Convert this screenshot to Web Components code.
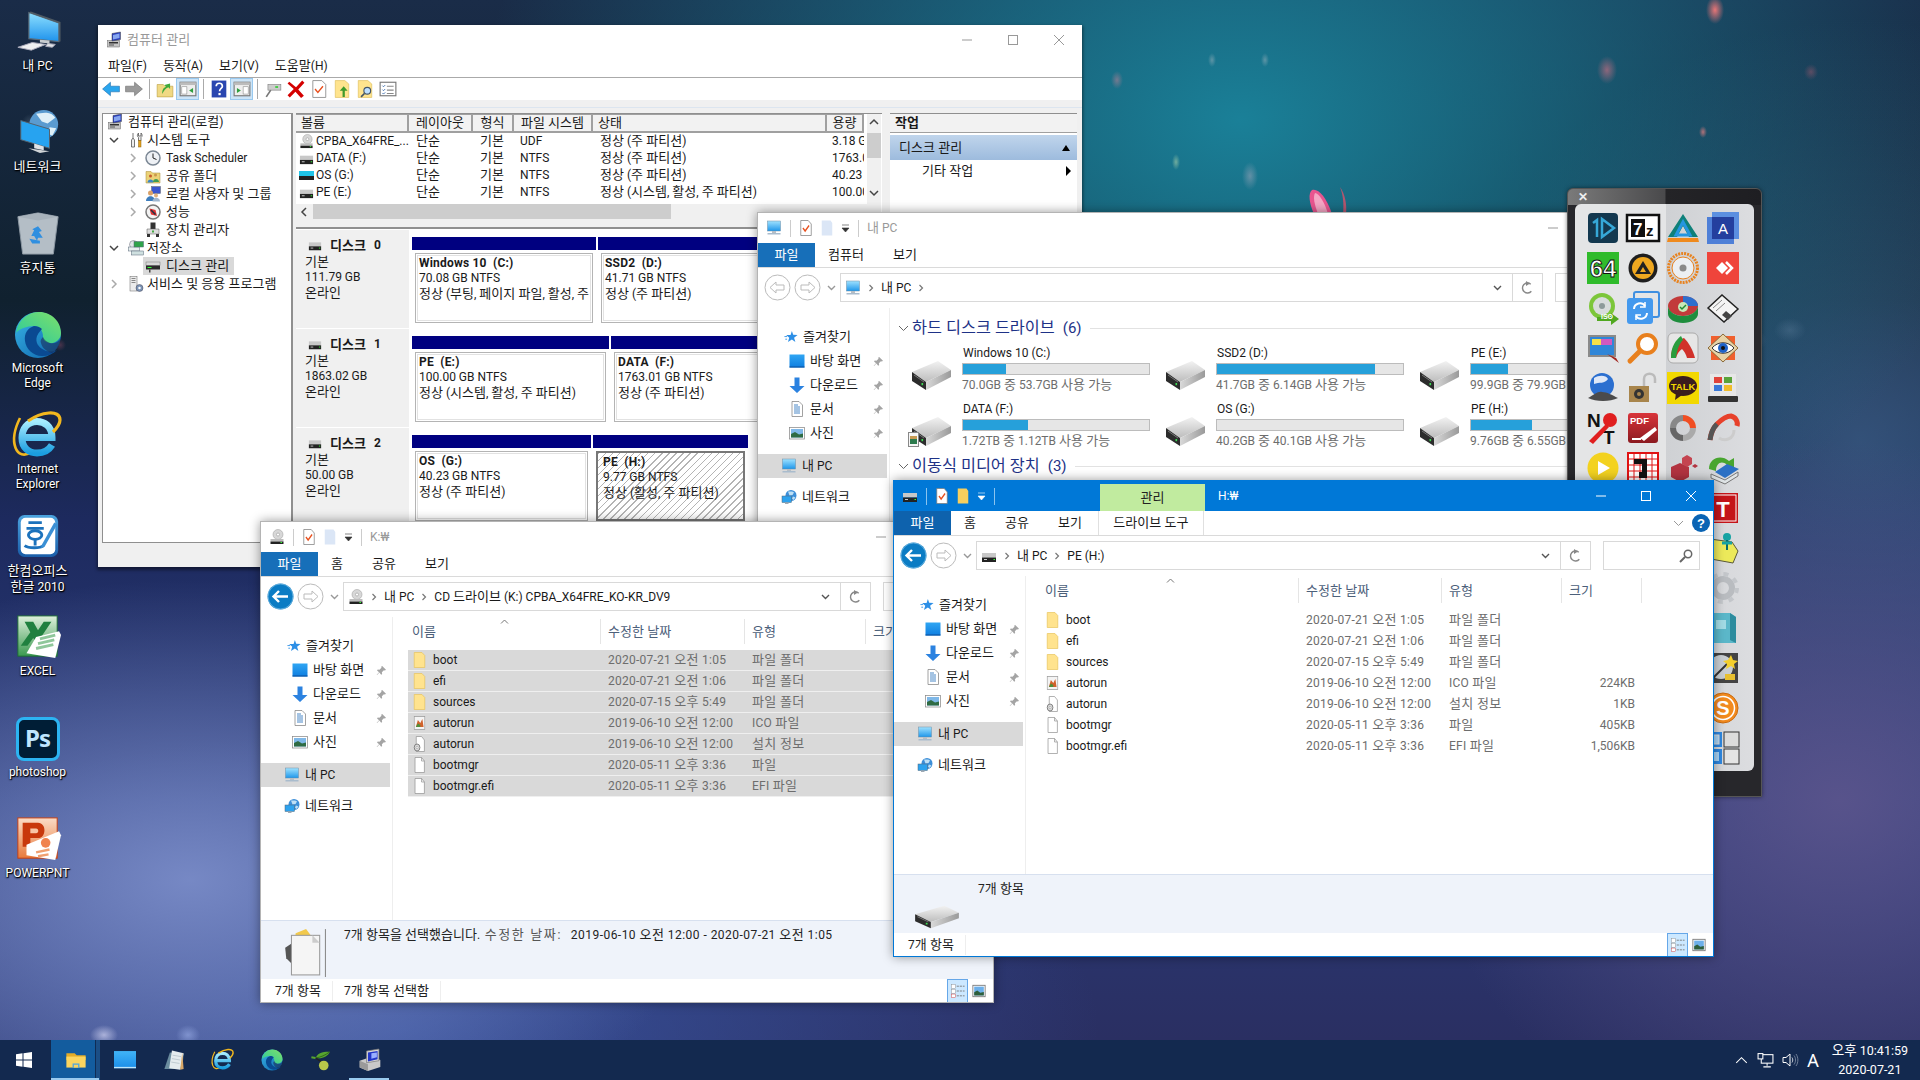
<!DOCTYPE html>
<html lang="ko">
<head>
<meta charset="utf-8">
<title>Desktop</title>
<style>
  html, body { margin: 0; padding: 0; background: #1a2b47; }
</style>
</head>
<body>
<desk-top>
  <desk-icons></desk-icons>

  <mmc-window></mmc-window>

  <explorer-window left="757" top="212" width="909" height="420" z="2" title="내 PC"
      tabs="컴퓨터,보기" crumbs="내 PC" title-icon="pc" addr-icon="pc" back="off">
    <drive-group heading="하드 디스크 드라이브 (6)">
      <drive-tile name="Windows 10 (C:)" used="23" info="70.0GB 중 53.7GB 사용 가능"></drive-tile>
      <drive-tile name="SSD2 (D:)" used="85" info="41.7GB 중 6.14GB 사용 가능"></drive-tile>
      <drive-tile name="PE (E:)" used="20" info="99.9GB 중 79.9GB 사용 가능"></drive-tile>
      <drive-tile name="DATA (F:)" used="35" info="1.72TB 중 1.12TB 사용 가능" shared="1"></drive-tile>
      <drive-tile name="OS (G:)" used="0" info="40.2GB 중 40.1GB 사용 가능"></drive-tile>
      <drive-tile name="PE (H:)" used="33" info="9.76GB 중 6.55GB 사용 가능"></drive-tile>
    </drive-group>
    <drive-group heading="이동식 미디어 장치 (3)"></drive-group>
  </explorer-window>

  <icon-dock></icon-dock>

  <explorer-window left="260" top="521" width="734" height="482" z="4" title="K:₩"
      tabs="홈,공유,보기" crumbs="내 PC|CD 드라이브 (K:) CPBA_X64FRE_KO-KR_DV9" title-icon="cd" addr-icon="cd"
      back="on" details="selected" status="7개 항목|7개 항목 선택함">
    <file-list widths="193px 144px 121px 80px" selected="1"></file-list>
  </explorer-window>

  <explorer-window left="893" top="480" width="821" height="477" z="5" title="H:₩" active="1"
      tabs="홈,공유,보기" crumbs="내 PC|PE (H:)" title-icon="sdrive" addr-icon="sdrive"
      back="on" details="drive" status="7개 항목" manage="1">
    <file-list widths="258px 143px 120px 80px" sizes="1"></file-list>
  </explorer-window>

  <task-bar></task-bar>
</desk-top>

<script>
const FONT = '"Roboto","Noto Sans CJK KR",sans-serif';

// malgun hangul runs about 1px wider than the latin next to it at 12px
const KO = /[\uac00-\ud7a3]+(?: +[\uac00-\ud7a3]+)*/g;
function bumpHangul(root) {
  const walker = document.createTreeWalker(root, NodeFilter.SHOW_TEXT);
  const nodes = [];
  while (walker.nextNode()) {
    const p = walker.currentNode.parentNode;
    if (p.nodeName !== 'STYLE' && KO.test(walker.currentNode.data)) nodes.push(walker.currentNode);
    KO.lastIndex = 0;
  }
  nodes.forEach(n => {
    const frag = document.createDocumentFragment();
    let last = 0;
    n.data.replace(KO, (m, i) => {
      if (i > last) frag.append(n.data.slice(last, i));
      const s = document.createElement('span');
      s.style.fontSize = '1.085em';
      s.textContent = m;
      frag.append(s);
      last = i + m.length;
      return m;
    });
    if (last < n.data.length) frag.append(n.data.slice(last));
    n.replaceWith(frag);
  });
}

class Base extends HTMLElement {
  connectedCallback() { this.render(); }
  paint(css, html) {
    const root = this.shadowRoot || this.attachShadow({ mode: 'open' });
    root.innerHTML = `<style>${css}</style>${html}`;
    bumpHangul(root);
  }
  attr(name, dflt = '') {
    return this.hasAttribute(name) ? this.getAttribute(name) : dflt;
  }
}

const grad = (id, a, b, dir = 'x1="0" y1="0" x2="0" y2="1"') =>
  `<linearGradient id="${id}" ${dir}><stop offset="0" stop-color="${a}"/><stop offset="1" stop-color="${b}"/></linearGradient>`;

const ICONS = {
  // small shell icons, 32 box
  pc: `<defs>${grad('g', '#9fe2ff', '#1f97ea')}</defs><rect x="3" y="2" width="26" height="20" fill="url(#g)" stroke="#6f8ea6"/><rect x="12" y="22" width="8" height="4" fill="#b7bec5"/><rect x="3" y="26" width="26" height="3" fill="#a9bccd"/>`,
  desk: `<defs>${grad('g', '#30a6f3', '#0f7ee0')}</defs><rect x="1" y="3" width="30" height="26" fill="url(#g)"/><rect x="1" y="27" width="30" height="2" fill="#0a4f9a"/>`,
  down: `<path d="M11 1h10v17h10L16 32 1 18h10z" fill="#2b82e0"/>`,
  doc: `<path d="M6 1h14l7 7v23H6z" fill="#fff" stroke="#8a8a8a" stroke-width="1.6"/><path d="M10 8h8M10 12h12M10 16h12M10 20h12M10 24h12" stroke="#4a88c7" stroke-width="2"/>`,
  pics: `<rect x="1" y="5" width="30" height="23" fill="#fff" stroke="#8a8a8a" stroke-width="1.5"/><rect x="4" y="8" width="24" height="17" fill="#7fb8e8"/><path d="M4 25v-7l8-4 8 5 8-2v8z" fill="#2f6b43"/>`,
  star: `<path d="M18 2l3 9 10 .5-8 6 3 10-8-6-9 6 3-10-7-6h10z" fill="#2d8fe6"/><path d="M1 15h6M3 21h4" stroke="#2d8fe6" stroke-width="2"/>`,
  pin: `<path d="M18 3l11 11-3 2-3-1-6 6 1 5-3 2-5-6-7 7-1-1 7-7-6-5 2-3 5 1 6-6-1-3z" fill="#a4a4a4"/>`,
  net: `<circle cx="20" cy="13" r="11" fill="#3d8fd8"/><path d="M14 5c4 1 8-2 12 2l-3 5-6 1zM24 15l5 2-4 5-3-3z" fill="#bfe0f5"/><rect x="2" y="14" width="19" height="13" fill="#2da2ee" stroke="#567"/><rect x="8" y="27" width="7" height="3" fill="#a0aab4"/>`,
  sdrive: `<rect x="2" y="10" width="28" height="9" fill="#c8c8c8"/><rect x="2" y="19" width="28" height="9" fill="#222"/><rect x="6" y="22" width="6" height="2" fill="#ccc"/><rect x="25" y="22" width="3" height="2" fill="#3f3"/>`,
  cd: `<circle cx="18" cy="11" r="10" fill="#d7d7d7" stroke="#999"/><circle cx="18" cy="11" r="3" fill="#fff" stroke="#888"/><rect x="3" y="20" width="26" height="5" fill="#bdbdbd"/><rect x="3" y="25" width="26" height="5" fill="#222"/><rect x="23" y="26" width="3" height="2" fill="#3f3"/>`,
  qdoc: `<path d="M4 1h17l7 7v23H4z" fill="#fff" stroke="#777" stroke-width="1.5"/><path d="M9 16l5 6 9-11" fill="none" stroke="#e8501e" stroke-width="3"/>`,
  qfolder: `<path d="M4 1h20l4 5v25H4z" fill="#dbe6f6"/>`,
  qfolderY: `<path d="M4 1h20l4 5v25H4z" fill="#f7cf5e"/>`,
  folder: `<path d="M3 1h19l7 6v24H3z" fill="#ffe38e" stroke="#e8c25a" stroke-width="1.5"/>`,
  ico: `<rect x="3" y="3" width="26" height="26" fill="#f4f4f4" stroke="#999" stroke-width="1.5"/><path d="M7 24l5-14 6 6 5-8 3 16z" fill="#d1622c"/><path d="M7 24l5-7 6 3v4z" fill="#4e8f3a"/>`,
  inf: `<path d="M8 1h13l7 7v23H8z" fill="#fff" stroke="#8d8d8d" stroke-width="1.5"/><circle cx="10" cy="23" r="7" fill="#ddd" stroke="#777" stroke-width="2"/><circle cx="10" cy="23" r="2.5" fill="#fff" stroke="#777"/>`,
  file: `<path d="M5 1h16l7 7v23H5z" fill="#fff" stroke="#8d8d8d" stroke-width="1.5"/><path d="M21 1v7h7" fill="none" stroke="#8d8d8d" stroke-width="1.5"/>`,
  multi: `<path d="M14 6l10-4 6 8-6 14-12 6z" fill="#f2c94c"/><path d="M4 20l9-6 4 10-6 12-6-6z" fill="#555"/><rect x="10" y="8" width="27" height="38" fill="#f5f5f5" stroke="#999"/><path d="M30 8l7 7h-7z" fill="#ccc"/><rect x="42" y="2" width="1" height="46" fill="#888"/>`,
  bigdrive: `<defs>${grad('t', '#f2f2f2', '#bdbdbd')}${grad('s', '#d9d9d9', '#9a9a9a', 'x1="0" y1="0" x2="1" y2="0"')}</defs><path d="M1 12L27 1l13 9-25 12z" fill="url(#t)"/><path d="M15 22l25-12v7L15 30z" fill="url(#s)"/><path d="M1 12l14 10v8L1 21z" fill="#2c2c2c"/><path d="M3 15l10 7" stroke="#777"/><rect x="10.5" y="23" width="1.6" height="2.2" fill="#3ddc54"/>`,

  // computer management tree and toolbar
  mmc: `<rect x="3" y="17" width="24" height="13" fill="#c4c4c4" stroke="#666"/><rect x="6" y="20" width="18" height="3" fill="#333"/><rect x="6" y="25" width="10" height="2" fill="#555"/><path d="M12 3l17-3v15l-17 3z" fill="#2a3fc0" stroke="#444"/><path d="M14 6l13-3v9l-13 3z" fill="#86a6f0"/>`,
  tools: `<path d="M10 2v10l-3 4v14h6V16l-3-4M21 2c-3 3-3 7 0 9v6h5V11c3-2 3-6 0-9v6h-5z" fill="#eee" stroke="#555" stroke-width="1.6"/><rect x="21" y="17" width="5" height="13" fill="#e7a21c" stroke="#8a6410"/>`,
  clock: `<circle cx="16" cy="16" r="14" fill="#eef1f5" stroke="#7b8794" stroke-width="3"/><path d="M16 7v9l7 3" fill="none" stroke="#222" stroke-width="2"/>`,
  share: `<path d="M2 7h10l3 3h15v20H2z" fill="#ecd277" stroke="#a78b34"/><circle cx="11" cy="16" r="3" fill="#c45a2c"/><path d="M5 29c0-8 12-8 12 0z" fill="#3b86c5"/><circle cx="21" cy="14" r="3" fill="#c9974c"/><path d="M16 28c0-8 12-8 12 0z" fill="#3e9b55"/>`,
  users: `<rect x="13" y="1" width="18" height="14" fill="#3b57cf" stroke="#666"/><circle cx="11" cy="14" r="5" fill="#d9a26a"/><path d="M2 30c0-13 18-13 18 0z" fill="#3d7dbd"/><circle cx="22" cy="19" r="4" fill="#e0b07c"/><path d="M15 31c0-10 15-10 15 0z" fill="#9fb6cf"/>`,
  perf: `<circle cx="16" cy="16" r="14" fill="#f3f3f3" stroke="#777" stroke-width="3"/><path d="M9 9l12 3 3 12-12-3z" fill="#d33"/><path d="M12 12l9 9" stroke="#234" stroke-width="3"/>`,
  devmgr: `<rect x="11" y="1" width="10" height="13" fill="#333"/><path d="M4 14h24v10H4z" fill="#ddd" stroke="#555"/><rect x="4" y="24" width="6" height="6" fill="#333"/><rect x="22" y="24" width="6" height="6" fill="#333"/><rect x="14" y="17" width="4" height="4" fill="#4a4"/>`,
  storage: `<circle cx="11" cy="9" r="8" fill="#dfe6e6" stroke="#667"/><rect x="1" y="14" width="22" height="8" fill="#e8efef" stroke="#567"/><rect x="7" y="22" width="24" height="8" fill="#cfe0e0" stroke="#567"/><rect x="12" y="3" width="19" height="11" fill="#2ea34a" stroke="#567"/>`,
  diskm: `<rect x="2" y="8" width="28" height="7" fill="#d8d8d8" stroke="#777"/><rect x="2" y="15" width="28" height="8" fill="#2a2a2a"/><rect x="8" y="23" width="3" height="6" fill="#444"/><rect x="5" y="18" width="8" height="2" fill="#3f3"/>`,
  svc: `<rect x="4" y="1" width="14" height="29" fill="#ececec" stroke="#666"/><path d="M7 5h8M7 9h8M7 13h8" stroke="#888" stroke-width="2"/><circle cx="23" cy="24" r="7" fill="#7b93b5" stroke="#445"/><circle cx="23" cy="24" r="2.5" fill="#fff"/>`,
  back: `<path d="M1 16L15 4v7h16v10H15v7z" fill="#2aa6ee" stroke="#1967a8"/>`,
  fwd: `<path d="M31 16L17 4v7H1v10h16v7z" fill="#9a9a9a" stroke="#666"/>`,
  up: `<path d="M2 8h11l3 3h14v19H2z" fill="#f0d984" stroke="#b89a3a"/><path d="M11 25c0-8 2-11 7-13l-3-3 10-3v10l-3-3c-5 2-8 6-11 12z" fill="#3eaa3a"/>`,
  panelL: `<rect x="2" y="4" width="28" height="24" fill="#eee" stroke="#777" stroke-width="2"/><rect x="2" y="4" width="28" height="5" fill="#bcbcbc"/><rect x="5" y="12" width="9" height="13" fill="#fff" stroke="#888"/><path d="M25 14v9l-7-4.500z" fill="#2d9e3e"/>`,
  panelR: `<rect x="2" y="4" width="28" height="24" fill="#eee" stroke="#777" stroke-width="2"/><rect x="2" y="4" width="28" height="5" fill="#bcbcbc"/><rect x="18" y="12" width="9" height="13" fill="#fff" stroke="#888"/><path d="M7 14v9l7-4.500z" fill="#2d9e3e"/>`,
  help: `<rect x="3" y="1" width="26" height="30" fill="#2a46b0"/><path d="M11 11c0-7 11-7 11 0 0 4-5 4-5 9" fill="none" stroke="#fff" stroke-width="3"/><rect x="15" y="23" width="4" height="4" fill="#fff"/>`,
  connect: `<rect x="7" y="8" width="23" height="10" fill="#ccc" stroke="#777"/><rect x="20" y="11" width="5" height="3" fill="#3c3"/><path d="M4 30L12 18" stroke="#777" stroke-width="3"/>`,
  del: `<path d="M4 3l12 10L27 1l4 4-11 12 10 11-5 4-10-11L5 31l-4-4 11-11L1 6z" fill="#d40000"/>`,
  props: `<path d="M5 1h16l7 7v23H5z" fill="#fff" stroke="#888" stroke-width="1.5"/><path d="M9 16l5 6 9-11" fill="none" stroke="#e8501e" stroke-width="2.500"/>`,
  exportf: `<path d="M4 1h17l7 6v24H4z" fill="#ffe48e" stroke="#d8b84e"/><path d="M17 30V19h-5l7-8 7 8h-5v11z" fill="#3f9a2c"/>`,
  findf: `<path d="M4 1h17l7 6v24H4z" fill="#ffe48e" stroke="#d8b84e"/><circle cx="20" cy="19" r="6" fill="#bfe0ff" stroke="#456" stroke-width="2"/><path d="M15 24l-6 6" stroke="#456" stroke-width="3"/>`,
  listv: `<rect x="2" y="4" width="28" height="24" fill="#fff" stroke="#777" stroke-width="2"/><path d="M6 10l2 2 3-3M6 17l2 2 3-3M6 23l2 2 3-3" fill="none" stroke="#36a" stroke-width="1.500"/><path d="M14 11h12M14 18h12M14 24h12" stroke="#888" stroke-width="2"/>`,
  viewd: `<rect x="1" y="1" width="9" height="9" fill="#fff" stroke="#888"/><rect x="1" y="12" width="9" height="9" fill="#fff" stroke="#888"/><rect x="1" y="23" width="9" height="8" fill="#fff" stroke="#c33"/><path d="M13 5h5M20 5h5M27 5h4M13 16h5M20 16h5M27 16h4M13 27h5M20 27h5M27 27h4" stroke="#777" stroke-width="2"/>`,
  viewp: `<rect x="2" y="3" width="28" height="26" fill="#fff" stroke="#777" stroke-width="2"/><rect x="5" y="6" width="22" height="20" fill="#6db0ea"/><path d="M5 26v-7l7-4 7 5 8-2v8z" fill="#2e5f3c"/>`,

  // desktop, 48 box
  dpc: `<defs>${grad('g', '#8ee0ff', '#1e92ec')}</defs><path d="M14.500 4.700L45.800 15.600V35L14.500 32z" fill="url(#g)" stroke="#5b6a76" stroke-width="1.200"/><path d="M14.500 4.700l2-1L47.500 14.500V35l-1.700 0V15.600z" fill="#4f5a63"/><path d="M3 41l15-5 14 2-15 6z" fill="#eef0f2" stroke="#aab"/><path d="M34 37l8 1-3 3-7-1z" fill="#dfe2e5" stroke="#aab"/><path d="M26 33l10 1v3l-10-1z" fill="#c8ccd0"/>`,
  dnet: `<circle cx="30" cy="16" r="15" fill="#5a9bd0"/><path d="M22 5c5 0 14-4 20 4l-8 6-6-2zM36 19l7 1-4 8-4-2z" fill="#dff0f8"/><path d="M6 12l30 9v20L6 32z" fill="#27a3f0" stroke="#545f6a"/><path d="M20 36l10 3v4l-10-2z" fill="#dfe3e6"/><path d="M14 41l22 3-10 2z" fill="#cfd3d6"/>`,
  dbin: `<path d="M3 7l21-4 21 4-5 39H8z" fill="#d8e0e6" fill-opacity=".82" stroke="#8d99a3"/><path d="M3 7l21 4 21-4-21-4z" fill="#a7b2bb"/><path d="M24 17l4 5-3 1 4 6h-5l-1 3-3-5h-3l3-6-2-1zM15 30l3 5h8v-3z" fill="#2f8fe0"/>`,
  dedge: `<defs>${grad('g', '#25c8a0', '#7ee06a', 'x1="0" y1="1" x2="1" y2="0"')}${grad('b', '#0d62aa', '#38b6e8', 'x1="1" y1="1" x2="0" y2="0"')}</defs><circle cx="24" cy="24" r="23" fill="url(#b)"/><path d="M2 22C4 8 15 1 25 1c13 0 22 10 22 21 0 6-5 11-12 10-4-1-6-3-6-6 0-6-3-11-9-11C13 15 5 18 2 22z" fill="url(#g)"/><path d="M20 15c-6 2-10 7-9 15 1 8 8 15 17 15 6 0 11-2 15-6-4 2-9 2-13 0-6-3-9-8-7-14 2-4 4-6 5-7-2-2-5-3-8-3z" fill="#0a4a92"/><path d="M29 26c1 3 4 5 7 6 5 1 9-1 11-5-1 7-5 13-9 15-7-2-10-6-11-10-1-2 0-4 2-6z" fill="#1c2a50" fill-opacity=".55"/>`,
  die: `<defs>${grad('g', '#a6ecff', '#1b9ee0')}</defs><path d="M6 6C-6 30 2 50 18 40" fill="none" stroke="#f2b71e" stroke-width="2.600"/><path d="M10 25.500H38C38 14 30 9.500 23 9.500 13 9.500 8 17 8 26c0 10 7 15 15 15 7 0 12-3 15-8" fill="none" stroke="url(#g)" stroke-width="7"/><path d="M14 9C27 0 46-3 46 8c0 4-3 8-7 12" fill="none" stroke="#f2b71e" stroke-width="3.200"/>`,
  dhwp: `<defs>${grad('g', '#4ba3df', '#1a5da8')}</defs><rect x="3" y="2" width="42" height="44" rx="7" fill="url(#g)"/><rect x="6" y="5" width="36" height="38" rx="5" fill="#fff"/><path d="M14 10h14M12 16h18" stroke="#1c72bc" stroke-width="3"/><ellipse cx="21" cy="23" rx="7" ry="4.500" fill="none" stroke="#1c72bc" stroke-width="3"/><path d="M21 28v6M10 34c4 3 16 3 20 0" fill="none" stroke="#1c72bc" stroke-width="3"/><path d="M28 33L41 10l3 2-13 23-4 2z" fill="#3a8fd4"/>`,
  dxls: `<defs>${grad('g', '#dff0dc', '#3b9a50')}</defs><rect x="3" y="2" width="41" height="42" fill="url(#g)" stroke="#1d6b35"/><path d="M10 8h9l5 9 6-9h8L28 23l5 8 -8 3-6-9-6 8H6l10-14z" fill="#20803f"/><path d="M22 24l24-6 2 4-6 24-30-5z" fill="#fff"/><path d="M26 26l16-4M24 31l17-4M22 36l18-4" stroke="#8fc79a" stroke-width="3"/>`,
  dppt: `<defs>${grad('g', '#fbdcc6', '#e87a3c')}</defs><rect x="3" y="2" width="41" height="42" fill="url(#g)" stroke="#c63d0f"/><path d="M8 7h16c9 0 9 16 0 16h-8v9H8z" fill="#c8380c"/><path d="M16 13v5h6c3 0 3-5 0-5z" fill="#f8c5a5"/><path d="M12 30l34-14 2 4-6 26-30-5z" fill="#fff"/><circle cx="32" cy="28" r="5" fill="#f0834e"/><path d="M22 38l14-3M24 42l11-2" stroke="#f0a070" stroke-width="2.500"/>`,

  // taskbar
  win: `<path d="M0 4.500l13-1.800V15H0zM15 2.400L32 0v15H15zM0 17h13v12.300L0 27.500zM15 17h17v15l-17-2.400z" fill="#fff"/>`,
  fx: `<path d="M2 6h12l3 3h13v7H2z" fill="#e3ac28"/><path d="M2 11h28v16H2z" fill="#fbd55f"/><rect x="11" y="21" width="10" height="6" fill="#5aa8d8"/><rect x="13" y="23" width="6" height="4" fill="#fbd55f"/>`,
  tdesk: `<defs>${grad('g', '#41b4f7', '#1a8de8')}</defs><rect x="0" y="3" width="32" height="25" fill="url(#g)"/><rect x="0" y="26" width="32" height="2" fill="#bfe6fb"/>`,
  note: `<path d="M10 5l20 2-2 22H2z" fill="#6a8c9e"/><path d="M13 2l17 4-5 24-16-2z" fill="#e4ebee"/><path d="M28 5l2 24-5 1z" fill="#d9a868"/><path d="M14 9l12 2M13 14l12 2M12 19l12 2" stroke="#aebcc3"/>`,
  cherry: `<path d="M8 13C12 4 22 4 29 4c-3 7-12 11-21 9z" fill="#57a52f"/><path d="M8 13c8-1 14-4 21-9" stroke="#234f12" fill="none"/><path d="M8 13l9 6" stroke="#222" stroke-width="2"/><circle cx="20" cy="24" r="7" fill="#b9c84a"/><path d="M2 12l6 1" stroke="#57a52f" stroke-width="3"/>`,
  tmmc: `<path d="M1 17l18-6 12 5v10l-18 6-12-5z" fill="#c9c9c9"/><path d="M1 17l12 5v10L1 27z" fill="#9a9a9a"/><path d="M11 3l18-3v17l-18 3z" fill="#d7d7d7" stroke="#777"/><path d="M13 5l14-2v12l-14 3z" fill="#2337c9"/><path d="M18 6l8-1v7l-8 2z" fill="#9ab0ff"/>`,
  caretup: `<path d="M3 22L16 9l13 13" fill="none" stroke="#fff" stroke-width="2.500"/>`,
  trnet: `<rect x="8" y="5" width="22" height="16" fill="none" stroke="#fff" stroke-width="2"/><rect x="2" y="3" width="9" height="10" fill="#13294f" stroke="#fff" stroke-width="2"/><path d="M19 21v5M12 28h14" stroke="#fff" stroke-width="2"/>`,
  trvol: `<path d="M2 11h6l8-7v24l-8-7H2z" fill="none" stroke="#fff" stroke-width="2"/><path d="M20 11c2 3 2 7 0 10" fill="none" stroke="#fff" stroke-width="1.500"/><path d="M24 7c4 5 4 13 0 18M28 4c5 7 5 17 0 24" fill="none" stroke="#8f9bb0" stroke-width="1.500"/>`,

  // icon dock, 32 box
  d1d: `<rect x="1" y="1" width="30" height="30" rx="4" fill="#13384f"/><path d="M6 11l4-3v17" fill="none" stroke="#36a8d8" stroke-width="2.500"/><path d="M15 7l12 9-12 9z" fill="none" stroke="#36a8d8" stroke-width="2.500"/>`,
  d7z: `<rect x="0" y="3" width="32" height="26" fill="#fff" stroke="#111" stroke-width="2.500"/><rect x="4" y="7" width="14" height="18" fill="#111"/><text x="6" y="23" font-size="17" font-weight="700" font-family="Liberation Sans" fill="#fff">7</text><text x="19" y="24" font-size="15" font-weight="700" font-family="Liberation Sans" fill="#111">z</text>`,
  dtri: `<path d="M16 2L1 25h9L16 14l6 11H31z" fill="#0e8079"/><path d="M16 10l-7 13h14z" fill="none" stroke="#2596e0" stroke-width="3"/><path d="M1 26h30l1 4H0z" fill="#ef8a1d"/>`,
  dacr: `<rect x="5" y="0" width="27" height="27" fill="#5b8fe0"/><rect x="0" y="5" width="27" height="27" fill="#3f76d6" fill-opacity=".9"/><rect x="5" y="5" width="22" height="22" fill="#243f9e"/><text x="16" y="22" text-anchor="middle" font-size="15" font-family="Liberation Sans" fill="#fff">A</text>`,
  d64: `<rect x="0" y="0" width="32" height="32" fill="#2fbb2b"/><text x="16" y="25" text-anchor="middle" font-size="24" font-weight="700" font-family="Liberation Sans" fill="#fff" stroke="#111" stroke-width=".9">64</text>`,
  daimp: `<circle cx="16" cy="16" r="14.500" fill="#1f1f1f"/><circle cx="16" cy="16" r="11" fill="#f0a820"/><path d="M16 9l8 13H8z" fill="#222"/><path d="M16 15l3 5h-6z" fill="#f0a820"/>`,
  dburn: `<circle cx="16" cy="16" r="14.500" fill="none" stroke="#e8821e" stroke-width="3" stroke-dasharray="2 1"/><circle cx="16" cy="16" r="11" fill="#eceff2" stroke="#e8821e"/><circle cx="16" cy="16" r="3.500" fill="#8a8a8a"/>`,
  dany: `<rect x="0" y="0" width="32" height="32" fill="#ef443b"/><path d="M9 16l6-6 6 6-6 6z" fill="#fff"/><path d="M19 10l6 6-6 6" fill="none" stroke="#fff" stroke-width="2.500"/>`,
  diso: `<circle cx="15" cy="14" r="13" fill="#7cc63a"/><circle cx="15" cy="14" r="9" fill="#d8dcdc"/><circle cx="15" cy="14" r="3" fill="#8d9a9a"/><path d="M10 25h14v-4l8 6-8 6v-4H10z" fill="#50a820"/><text x="20" y="27" text-anchor="middle" font-size="7" font-weight="700" font-family="Liberation Sans" fill="#fff">ISO</text>`,
  dsync: `<rect x="7" y="0" width="25" height="25" rx="2" fill="none" stroke="#3f8fe0" stroke-width="2"/><rect x="0" y="6" width="26" height="26" rx="3" fill="#4499ee"/><path d="M7 17a6 6 0 0 1 11-3M20 21a6 6 0 0 1-11 3" fill="none" stroke="#fff" stroke-width="2"/><path d="M18 10v5h-5M9 28v-5h5" fill="none" stroke="#fff" stroke-width="1.500"/>`,
  dpart: `<ellipse cx="16" cy="14" rx="15" ry="10" fill="#c23a3a"/><path d="M16 14V4c8 0 15 4 15 10z" fill="#2d6fce"/><path d="M1 14v8c0 5 7 9 15 9s15-4 15-9v-8c0 5-7 10-15 10S1 19 1 14z" fill="#1e8d3d"/><circle cx="16" cy="15" r="5" fill="#c9e8b8"/><path d="M13 15l2 2 4-4" fill="none" stroke="#218a35" stroke-width="1.500"/>`,
  dflop: `<path d="M1 16L15 3l16 14-14 13z" fill="#f4f4f4" stroke="#222" stroke-width="1.500"/><path d="M15 23l4-4 6 5-4 4z" fill="#444"/><path d="M6 16l9-8M9 19l9-8" stroke="#888"/>`,
  dscr: `<rect x="1" y="3" width="28" height="22" fill="#8a8a8a"/><rect x="3" y="5" width="24" height="18"  fill="#2f86d8"/><rect x="5" y="7" width="14" height="6" fill="#f4e04a"/><rect x="14" y="7" width="11" height="6" fill="#d05ac0"/><path d="M20 22l12 9-3-5z" fill="#a2261e"/>`,
  dmag: `<circle cx="20" cy="12" r="9" fill="#fff" stroke="#e8801e" stroke-width="4"/><path d="M13 19L3 29" stroke="#e8801e" stroke-width="5" stroke-linecap="round"/>`,
  dtile: `<rect x="1" y="1" width="30" height="30" rx="5" fill="#e6e6e6" stroke="#aaa"/><path d="M4 26C4 14 10 8 17 6c5 5 9 12 11 20H20c-1-4-3-7-5-9-3 2-5 5-6 9z" fill="#d1312a"/><path d="M4 26C4 14 9 8 14 4l2 4c-4 4-6 10-7 18z" fill="#2a9d3e"/>`,
  deye: `<rect x="4" y="4" width="24" height="24" fill="#f0602e"/><path d="M16 2l15 14-15 14L1 16z" fill="#e8d3a6" stroke="#8a6a3a"/><path d="M5 16c6-7 16-7 22 0-6 7-16 7-22 0z" fill="#fff" stroke="#333"/><circle cx="16" cy="16" r="5" fill="#1f63c8"/><circle cx="16" cy="16" r="2" fill="#111"/>`,
  dglobe: `<circle cx="15" cy="13" r="12" fill="#2b6fd0"/><path d="M7 6c5-3 12-3 14 1-3 5-9 3-14 5z" fill="#dfe8f7"/><path d="M1 26c6-3 10-7 14-6 5 0 10 3 16 6-8 4-22 4-30 0z" fill="#4b4b4b"/>`,
  dlock: `<rect x="2" y="14" width="20" height="16" fill="#a8854c"/><circle cx="12" cy="22" r="5" fill="#333"/><circle cx="12" cy="22" r="2" fill="#a8854c"/><path d="M17 14V7c0-7 11-7 11 0v4" fill="none" stroke="#bbb" stroke-width="2.500"/>`,
  dtalk: `<rect x="0" y="0" width="32" height="32" fill="#f2d800"/><ellipse cx="16" cy="14" rx="14" ry="10" fill="#3a1d1d"/><path d="M9 21l-1 7 7-5z" fill="#3a1d1d"/><text x="16" y="18" text-anchor="middle" font-size="9.500" font-weight="700" font-family="Liberation Sans" fill="#f2d800">TALK</text>`,
  dwin: `<rect x="3" y="2" width="26" height="22" fill="#e7e7e7"/><rect x="7" y="5" width="8" height="6" fill="#e0433a"/><rect x="17" y="5" width="8" height="6" fill="#59a33a"/><rect x="7" y="13" width="8" height="6" fill="#3a79d8"/><rect x="17" y="13" width="8" height="6" fill="#f0bc2a"/><rect x="1" y="24" width="30" height="6" rx="1" fill="#333"/>`,
  dnt: `<text x="0" y="15" font-size="19" font-weight="700" font-family="Liberation Sans" fill="#111">N</text><text x="16" y="32" font-size="19" font-weight="700" font-family="Liberation Sans" fill="#111">T</text><circle cx="23" cy="8" r="7" fill="#e01f1f"/><path d="M19 12L2 29l4 3 16-17z" fill="#e01f1f"/>`,
  dpdf: `<defs>${grad('g', '#d9343a', '#8b1a20')}</defs><rect x="1" y="1" width="30" height="30" rx="3" fill="url(#g)"/><text x="3" y="12" font-size="9.500" font-weight="700" font-family="Liberation Sans" fill="#fff">PDF</text><path d="M13 26l15-11 2 3-13 11z" fill="#fff"/><path d="M5 27h9" stroke="#fff" stroke-width="2"/>`,
  dring: `<path d="M16 3a13 13 0 0 1 13 13h-6a7 7 0 0 0-7-7z" fill="#f04e23"/><path d="M29 16a13 13 0 0 1-13 13v-6a7 7 0 0 0 7-7z" fill="#aaa"/><path d="M16 29A13 13 0 0 1 3 16h6a7 7 0 0 0 7 7z" fill="#666"/><path d="M3 16A13 13 0 0 1 16 3v6a7 7 0 0 0-7 7z" fill="#888"/>`,
  dsh: `<path d="M3 28c1-8 3-12 7-16s10-8 14-8a8 8 0 0 1 6 10" fill="none" stroke="#e7412b" stroke-width="5"/><path d="M3 28c1-8 3-12 7-16" fill="none" stroke="#555" stroke-width="5"/><path d="M27 18c0 9-9 12-15 8" fill="none" stroke="#ccc" stroke-width="3"/>`,
  dplay: `<circle cx="16" cy="16" r="15.500" fill="#f3d21f"/><path d="M11 9l12 7-12 7z" fill="#fff"/>`,
  dgrid: `<rect x="1" y="1" width="30" height="30" fill="#fff" stroke="#e01212" stroke-width="2"/><path d="M1 7h30M1 13h30M1 19h30M1 25h30M7 1v30M13 1v30M19 1v30M25 1v30" stroke="#e01212"/><path d="M7 7h13v19h-8v-6h3v-8H7z" fill="#111"/>`,
  dreg: `<path d="M4 15l9-4 9 4-9 5zM4 15v10l9 5V20zM22 15v10l-9 5V20z" fill="#b23340"/><path d="M15 6l5-3 5 3-5 3zM15 6v6l5 3V9zM25 6v6l-5 3V9z" fill="#c44450"/><path d="M25 14l3-2 3 2-3 2z" fill="#b23340"/>`,
  dbak: `<path d="M2 17C2 6 14 2 22 9l5-3v12l-11-2 4-3c-5-5-11-2-11 6z" fill="#48a52f"/><path d="M8 20l12-8 12 5-14 9z" fill="#2b70c4"/><path d="M4 22l14 6 13-8v4l-13 8-14-6z" fill="#dfe4e6" stroke="#777"/>`,
  dt: `<rect x="1" y="1" width="30" height="30" fill="#c41419"/><rect x="3" y="3" width="26" height="26" fill="none" stroke="#fff"/><text x="16" y="25" text-anchor="middle" font-size="22" font-weight="700" font-family="Liberation Sans" fill="#fff">T</text>`,
  dnote: `<path d="M3 7l22 3 6 9-5 12-22-4z" fill="#ece95a" stroke="#5a5a3a"/><circle cx="20" cy="5" r="4" fill="#17a3a3"/><path d="M20 8v10" stroke="#0a6a6a" stroke-width="2"/><path d="M15 11h10" stroke="#17a3a3" stroke-width="3"/>`,
  dgear: `<circle cx="16" cy="16" r="9" fill="none" stroke="#b9bcc0" stroke-width="6"/><circle cx="16" cy="16" r="14" fill="none" stroke="#c3c6ca" stroke-width="4" stroke-dasharray="5 6"/>`,
  dbook: `<path d="M3 1h20l6 4v26H8c-3 0-5-2-5-4z" fill="#5bb7c9"/><path d="M23 1l6 4v26l-6-3z" fill="#2d8c9e"/><rect x="9" y="8" width="10" height="9" fill="#a2dbe5"/>`,
  ddisk: `<rect x="1" y="1" width="30" height="30" fill="#444"/><circle cx="14" cy="15" r="12" fill="#c9ced2"/><path d="M5 27L22 10" stroke="#333" stroke-width="2"/><path d="M24 3l2 5 5 1-4 3 1 5-4-3-5 3 1-5-4-3 5-1z" fill="#f4cf2c"/><rect x="18" y="22" width="10" height="6" fill="#e8c030"/>`,
  ds: `<circle cx="16" cy="16" r="15" fill="#f28a1e" stroke="#c96a10"/><circle cx="16" cy="16" r="11.500" fill="none" stroke="#fff" stroke-width="1.500"/><text x="16" y="23" text-anchor="middle" font-size="20" font-weight="700" font-family="Liberation Sans" fill="#fff">S</text>`,
  dsq: `<rect x="0" y="0" width="15" height="15" fill="#2e87e0"/><rect x="3" y="3" width="9" height="9" fill="#a8d4f7" stroke="#ddd"/><rect x="17" y="0" width="15" height="15" fill="#dcdcdc" stroke="#333"/><rect x="0" y="17" width="15" height="15" fill="#2e87e0"/><rect x="3" y="20" width="9" height="9" fill="#a8d4f7"/><rect x="17" y="17" width="15" height="15" fill="#e4e4e4" stroke="#333"/>`
};

const BIG = ['dpc', 'dnet', 'dbin', 'dedge', 'die', 'dhwp', 'dxls', 'dppt'];

class XIcon extends Base {
  render() {
    const name = this.attr('name');
    const w = this.attr('size', '16');
    const h = this.attr('h', w);
    const box = name === 'multi' ? '0 0 44 48' : name === 'bigdrive' ? '0 0 41 31' : BIG.includes(name) ? '0 0 48 48' : '0 0 32 32';
    this.paint(`:host{display:inline-flex;flex:none;width:${w}px;height:${h}px}svg{display:block;overflow:visible}`,
      `<svg width="${w}" height="${h}" viewBox="${box}" preserveAspectRatio="none">${ICONS[name] || ''}</svg>`);
  }
}

class DeskTop extends Base {
  render() {
    const dots = [
      [1715,10,9,14,'rgba(242,120,120,.95)'],[1607,70,10,14,'rgba(190,110,130,.7)'],[1117,80,6,9,'rgba(190,130,150,.55)'],
      [1212,60,4,7,'rgba(160,180,190,.5)'],[1265,60,4,7,'rgba(160,180,190,.5)'],[1703,132,4,6,'rgba(240,130,130,.7)'],
      [1176,162,4,8,'rgba(170,210,170,.6)'],[1250,176,8,14,'rgba(170,170,190,.5)'],[1178,300,12,20,'rgba(130,180,150,.5)'],
      [1328,298,8,14,'rgba(130,170,170,.45)'],[1811,72,7,8,'rgba(170,90,110,.45)'],
      [30,122,8,8,'rgba(150,170,190,.22)'],[38,340,14,14,'rgba(200,90,120,.35)'],[60,345,6,6,'rgba(200,90,120,.3)'],
      [188,1035,12,10,'rgba(180,200,255,.45)'],[104,1035,14,10,'rgba(230,230,255,.6)'],[1790,330,16,12,'rgba(120,150,180,.25)'],
      [1755,340,12,10,'rgba(120,150,180,.22)']
    ];
    const spots = dots.map(d => `radial-gradient(${d[2]}px ${d[3]}px at ${d[0]}px ${d[1]}px, ${d[4]}, transparent)`).join(',');
    this.paint(`
      :host {
        display: block; position: fixed; inset: 0; width: 1920px; height: 1080px; overflow: hidden;
        font: 12px/16px ${FONT}; color: #1a1a1a;
        background:
          ${spots},
          radial-gradient(520px 300px at 190px 880px, rgba(122,140,200,.95), transparent),
          radial-gradient(760px 520px at 1240px 120px, #1a8098, transparent),
          radial-gradient(420px 360px at 1840px 800px, rgba(90,84,140,.95), transparent),
          radial-gradient(420px 420px at 1860px 440px, rgba(60,95,135,.75), transparent),
          radial-gradient(700px 300px at 400px 1030px, rgba(60,90,170,.8), transparent),
          linear-gradient(180deg, #1a2c48 0, #10212f 300px, #1d2a5e 520px, #2a3a78 800px, #2a2f62 1040px);
      }
      .flower { position: absolute; left: 1300px; top: 185px; }
    `, `<svg class="flower" width="70" height="30" viewBox="0 0 70 30"><path d="M12 5c6-2 14 6 20 24H14C9 18 8 8 12 5z" fill="#e8558f"/><path d="M15 8c4 0 10 10 13 21H18C14 18 13 12 15 8z" fill="#f5a6c4"/><path d="M40 2c3 8 4 16 3 27h3c1-10-1-20-6-27z" fill="#b2566f"/></svg><slot></slot>`);
  }
}

class DeskIcons extends Base {
  render() {
    const items = [
      ['dpc','내 PC',46],['dnet','네트워크',46],['dbin','휴지통',46],['dedge','Microsoft<br>Edge',48],
      ['die','Internet<br>Explorer',48],['dhwp','한컴오피스<br>한글 2010',46],['dxls','EXCEL',46],['dps','photoshop'],['dppt','POWERPNT',46]
    ];
    this.paint(`
      :host { position: absolute; left: 0; top: 8px; width: 75px; display: flex; flex-direction: column; color: #fff; }
      .it { height: 101px; display: flex; flex-direction: column; align-items: center; text-align: center;
            text-shadow: 0 1px 2px #000, 1px 1px 1px #000; line-height: 15px; }
      .ic { height: 48px; margin-bottom: 2px; }
      .ps { display: block; width: 44px; height: 44px; margin-top: 2px; box-sizing: border-box; background: #001e36; border: 3px solid #2cb4f2; border-radius: 8px;
            color: #bfe6ff; font: 700 24px/36px "Noto Sans",sans-serif; letter-spacing: -1px; text-shadow: none; }
      .lb { display: block; }
    `, items.map(([n, l, s]) => `<div class="it"><div class="ic">${n === 'dps' ? '<b class="ps">Ps</b>' : `<x-icon name="${n}" size="${s}"></x-icon>`}</div><div class="lb">${l}</div></div>`).join(''));
  }
}

const ctl = (color) => `
  <svg width="12" height="12" viewBox="0 0 12 12"><path d="M1 6h10" stroke="${color}"/></svg>`;
const WIN_MAX = c => `<svg width="12" height="12" viewBox="0 0 12 12"><rect x="1.500" y="1.500" width="9" height="9" fill="none" stroke="${c}"/></svg>`;
const WIN_X = c => `<svg width="12" height="12" viewBox="0 0 12 12"><path d="M1 1l10 10M11 1L1 11" stroke="${c}"/></svg>`;

class MmcWindow extends Base {
  render() {
    const tree = [
      [0,'', 'mmc','컴퓨터 관리(로컬)'],[1,'v','tools','시스템 도구'],[2,'>','clock','Task Scheduler'],
      [2,'>','share','공유 폴더'],[2,'>','users','로컬 사용자 및 그룹'],[2,'>','perf','성능'],[2,'','devmgr','장치 관리자'],
      [1,'v','storage','저장소'],[2,'','diskm','디스크 관리',1],[1,'>','svc','서비스 및 응용 프로그램']
    ];
    const chev = c => c === 'v' ? '<svg width="10" height="10" viewBox="0 0 10 10"><path d="M1 3l4 4 4-4" fill="none" stroke="#444" stroke-width="1.500"/></svg>'
      : c === '>' ? '<svg width="10" height="10" viewBox="0 0 10 10"><path d="M3 1l4 4-4 4" fill="none" stroke="#aaa" stroke-width="1.500"/></svg>' : '';
    const treeHtml = tree.map(([l, c, i, t, sel]) => `
      <div class="tr l${l}">${l ? `<i class="ch">${chev(c)}</i>` : ''}<span class="w ${sel ? 'sel' : ''}"><x-icon name="${i}" size="16"></x-icon><span class="tt">${t}</span></span></div>`).join('');
    const vols = [
      ['cd','CPBA_X64FRE_...','UDF','정상 (주 파티션)','3.18 GB'],['sdrive','DATA (F:)','NTFS','정상 (주 파티션)','1763.01 GB'],
      ['tealdrive','OS (G:)','NTFS','정상 (주 파티션)','40.23 GB'],['sdrive','PE (E:)','NTFS','정상 (시스템, 활성, 주 파티션)','100.00 GB']
    ];
    const volHtml = vols.map(v => `
      <div class="row"><div class="vc">${v[0] === 'tealdrive' ? '<i class="teal"></i>' : `<x-icon name="${v[0]}" size="15"></x-icon>`}<span>${v[1]}</span></div>
      <div>단순</div><div>기본</div><div class="fs">${v[2]}</div><div>${v[3]}</div><div class="cap">${v[4]}</div></div>`).join('');
    const tb = n => `<span class="tb"><x-icon name="${n}" size="18"></x-icon></span>`;
    const on = n => `<span class="tb on"><x-icon name="${n}" size="18"></x-icon></span>`;
    this.paint(`
      :host { position: absolute; left: 98px; top: 25px; width: 984px; height: 542px; z-index: 1;
              display: flex; flex-direction: column; background: #f0f0f0; box-shadow: 0 2px 3px 1px rgba(0,0,0,.45); }
      .title { height: 29px; background: #fff; display: flex; align-items: center; padding-left: 8px; gap: 5px; color: #999; flex: none; position: relative; }
      .ctl { margin-left: auto; display: flex; align-items: center; }
      .ctl span { width: 46px; display: flex; justify-content: center; }
      .menu { height: 23px; background: #fff; display: flex; align-items: center; gap: 16px; padding-left: 10px; border-bottom: 1px solid #aaa; flex: none; }
      .tools { height: 22px; background: #fff; display: flex; align-items: center; padding-left: 1px; flex: none; }
      .tb { width: 23px; height: 22px; display: flex; align-items: center; justify-content: center; box-sizing: border-box; }
      .tb.on { background: #cce4f7; border: 1px solid #99c9ef; }
      .sp { width: 1px; height: 20px; background: #aaa; margin: 0 3px 0 4px; }
      .band { height: 7px; background: #f0f0f0; border-bottom: 1px solid #dce5ef; flex: none; }
      .work { flex: 1; display: flex; padding: 5px 0 24px 4px; min-height: 0; }
      .tree { width: 188px; border: 1px solid #8f8f8f; border-width: 1px 2px 1px 1px; background: #fff; flex: none; }
      .tr { height: 18px; display: flex; align-items: center; white-space: nowrap; }
      .ch { width: 10px; display: flex; flex: none; }
      .w { display: flex; align-items: center; height: 18px; }
      .l0 { padding-left: 4px; margin-top: -1px; } .l0 .tt { margin-left: 5px; }
      .l1 { padding-left: 6px; } .l1 .ch { margin-right: 9px; } .l1 .tt { margin-left: 3px; }
      .l2 { padding-left: 25px; } .l2 .ch { margin-right: 7px; } .l2 .tt { margin-left: 5px; }
      .w.sel { background: #d9d9d9; margin-left: -2px; padding-left: 2px; padding-right: 5px; }
      .main { width: 586px; margin-left: 3px; flex: none; background: #fff; position: relative; overflow: hidden;
              border-top: 1px solid #8f8f8f; }
      .list { height: 105px; position: relative; }
      .head, .row { display: grid; grid-template-columns: 113px 64px 41px 79px 234px 37px; width: 568px; }
      .head { background: #f2f2f2; border-bottom: 2px solid #a0a0a0; margin-bottom: -1px; box-sizing: border-box; height: 19px; border-top: 1px solid #a0a0a0; position: relative; z-index: 1; }
      .head div { border-right: 2px solid #a0a0a0; text-align: center; white-space: nowrap; line-height: 16px; }
      .head .l { text-align: left; padding-left: 5px; }
      .row { height: 17px; align-items: center; line-height: 17px; }
      .row > div { padding-left: 7px; white-space: nowrap; min-width: 0; box-sizing: border-box; }
      .row .fs { padding-left: 6px; }
      .row .cap { padding-left: 5px; overflow: hidden; }
      .row .vc { padding-left: 3px; display: flex; align-items: center; gap: 2px; }
      .teal { width: 15px; height: 9px; flex: none; background: linear-gradient(#20c4e8 60%, #222 60%); display: block; }
      .vs { position: absolute; left: 571px; top: 0; width: 14px; height: 104px; background: #f0f0f0; }
      .vs .th { position: absolute; top: 19px; left: 0; width: 14px; height: 25px; background: #cdcdcd; }
      .vs svg { position: absolute; left: 2px; }
      .hs { position: absolute; left: 0; top: 90px; width: 571px; height: 15px; background: #f0f0f0; }
      .hs .th { position: absolute; left: 17px; top: 0; width: 358px; height: 15px; background: #cdcdcd; }
      .hs svg { position: absolute; left: 4px; top: 3px; }
      .split { height: 8px; background: #f0f0f0; border-bottom: 2px solid #8f8f8f; }
      .disks { background: #fff; }
      .drow { display: flex; height: 99px; box-sizing: border-box; }
      .dl { width: 113px; background: #f0f0f0; flex: none; padding: 7px 0 0 9px; box-sizing: border-box; line-height: 15px; margin-top: 1px; }
      .dn { display: flex; align-items: center; gap: 8px; font-weight: 700; margin-bottom: 1px; height: 16px; margin-left: 3px; }
      .ps { display: flex; gap: 2px; margin-left: 3px; padding-top: 8px; }
      .action { width: 187px; margin-left: 8px; background: #fff; flex: none; border-top: 1px solid #8f8f8f; }
      .action h4 { margin: 0; height: 18px; line-height: 17px; font-size: 12px; padding-left: 5px; background: #f2f2f2; border-bottom: 1px solid #a0a0a0; font-weight: 700; }
      .ab { height: 25px; margin-top: 2px; display: flex; align-items: center; padding-left: 9px; background: linear-gradient(#c0d5ec, #9dbbdd); }
      .ao { height: 24px; display: flex; align-items: center; padding-left: 32px; margin-top: -1px; }
      .tri { margin-left: auto; margin-right: 6px; }
    `, `
      <div class="title"><x-icon name="mmc" size="16"></x-icon>컴퓨터 관리
        <div class="ctl"><span>${ctl('#999')}</span><span>${WIN_MAX('#999')}</span><span>${WIN_X('#999')}</span></div></div>
      <div class="menu"><div>파일(F)</div><div>동작(A)</div><div>보기(V)</div><div>도움말(H)</div></div>
      <div class="tools">${tb('back')}${tb('fwd')}<i class="sp"></i>${tb('up')}${on('panelL')}<i class="sp"></i>${tb('help')}${on('panelR')}<i class="sp"></i>${tb('connect')}${tb('del')}${tb('props')}${tb('exportf')}${tb('findf')}${tb('listv')}</div>
      <div class="band"></div>
      <div class="work">
        <div class="tree">${treeHtml}</div>
        <div class="main">
          <div class="list">
            <div class="head"><div class="l">볼륨</div><div>레이아웃</div><div>형식</div><div>파일 시스템</div><div class="l">상태</div><div>용량</div></div>
            ${volHtml}
            <div class="vs"><svg width="10" height="10" style="top:4px" viewBox="0 0 10 10"><path d="M1 6l4-4 4 4" fill="none" stroke="#444" stroke-width="1.500"/></svg><div class="th"></div><svg width="10" height="10" style="top:74px" viewBox="0 0 10 10"><path d="M1 3l4 4 4-4" fill="none" stroke="#444" stroke-width="1.500"/></svg></div>
            <div class="hs"><svg width="8" height="10" viewBox="0 0 8 10"><path d="M6 1L2 5l4 4" fill="none" stroke="#444" stroke-width="1.500"/></svg><div class="th"></div></div>
          </div>
          <div class="split"></div>
          <div class="disks">
            <div class="drow"><div class="dl"><div class="dn"><x-icon name="sdrive" size="14"></x-icon>디스크 0</div>기본<br>111.79 GB<br>온라인</div>
              <div class="ps"><disk-part w="184" name="Windows 10  (C:)" size="70.08 GB NTFS" state="정상 (부팅, 페이지 파일, 활성, 주 파티션)"></disk-part><disk-part w="200" name="SSD2  (D:)" size="41.71 GB NTFS" state="정상 (주 파티션)"></disk-part></div></div>
            <div class="drow"><div class="dl"><div class="dn"><x-icon name="sdrive" size="14"></x-icon>디스크 1</div>기본<br>1863.02 GB<br>온라인</div>
              <div class="ps"><disk-part w="197" name="PE  (E:)" size="100.00 GB NTFS" state="정상 (시스템, 활성, 주 파티션)"></disk-part><disk-part w="190" name="DATA  (F:)" size="1763.01 GB NTFS" state="정상 (주 파티션)"></disk-part></div></div>
            <div class="drow"><div class="dl"><div class="dn"><x-icon name="sdrive" size="14"></x-icon>디스크 2</div>기본<br>50.00 GB<br>온라인</div>
              <div class="ps"><disk-part w="179" name="OS  (G:)" size="40.23 GB NTFS" state="정상 (주 파티션)"></disk-part><disk-part w="155" hatched="1" name="PE  (H:)" size="9.77 GB NTFS" state="정상 (활성, 주 파티션)"></disk-part></div></div>
          </div>
        </div>
        <div class="action">
          <h4>작업</h4>
          <div class="ab">디스크 관리<svg class="tri" width="10" height="8" viewBox="0 0 10 8"><path d="M5 1l4 6H1z"/></svg></div>
          <div class="ao">기타 작업<svg class="tri" width="6" height="10" viewBox="0 0 6 10"><path d="M1 0l5 5-5 5z"/></svg></div>
        </div>
      </div>
    `);
  }
}

class DiskPart extends Base {
  render() {
    const w = this.attr('w', '180');
    const hatched = this.hasAttribute('hatched');
    this.paint(`
      :host { display: block; width: ${w}px; flex: none; }
      .bar { height: 13px; background: #000080; }
      .box { height: 70px; margin: 3px 3px 0; box-sizing: border-box; padding: 2px 3px; border: 1px solid #b4b4b4; outline: 1px solid #e2e2e2; outline-offset: -3px;
             line-height: 15px; overflow: hidden; white-space: nowrap; background: #fff; }
      .box.h { border: 2px solid #777; outline: 0; background: repeating-linear-gradient(135deg, #b4b4b4 0 1px, #fff 1px 5px); padding: 2px 5px; }
      b { display: block; white-space: pre; letter-spacing: .2px; }
    `, `<div class="bar"></div><div class="box ${hatched ? 'h' : ''}"><b>${this.attr('name')}</b>${this.attr('size')}<br>${this.attr('state')}</div>`);
  }
}

class NavPane extends Base {
  render() {
    const row = (cls, icon, w, text, pin) => `<div class="r ${cls}"><x-icon name="${icon}" size="${w}"></x-icon><div>${text}</div>${pin ? '<x-icon class="p" name="pin" size="11"></x-icon>' : ''}</div>`;
    this.paint(`
      :host { display: block; width: 132px; box-sizing: border-box; border-right: 1px solid #eee; flex: none; padding-top: 17px; }
      .r { height: 24px; display: flex; align-items: center; gap: 5px; white-space: nowrap; width: 129px; box-sizing: border-box; }
      .fav { padding-left: 26px; }
      .sub { padding-left: 31px; }
      .top { padding-left: 23px; }
      .p { margin-left: auto; margin-right: 3px; }
      .sel { background: #d9d9d9; margin-top: 9px; margin-bottom: 7px; }
    `, row('fav', 'star', 14, '즐겨찾기') + row('sub', 'desk', 16, '바탕 화면', 1) + row('sub', 'down', 16, '다운로드', 1)
       + row('sub', 'doc', 16, '문서', 1) + row('sub', 'pics', 16, '사진', 1)
       + row('top sel', 'pc', 16, '내 PC') + row('top', 'net', 16, '네트워크'));
  }
}

class ExplorerWindow extends Base {
  render() {
    const active = this.hasAttribute('active');
    const on = this.attr('back') === 'on';
    const tabs = this.attr('tabs').split(',');
    const crumbs = this.attr('crumbs').split('|');
    const status = this.attr('status') ? this.attr('status').split('|') : [];
    const mode = this.attr('details');
    const fg = active ? '#fff' : '#999';
    const sep = `<i class="qs"></i>`;
    const gt = `<svg class="gt" width="6" height="8" viewBox="0 0 6 8"><path d="M1.500 1l3 3-3 3" fill="none" stroke="#777" stroke-width="1.200"/></svg>`;
    const dn = (c) => `<svg width="9" height="6" viewBox="0 0 9 6"><path d="M1 1l3.500 3.500L8 1" fill="none" stroke="${c}" stroke-width="1.400"/></svg>`;
    const backBtn = on
      ? `<svg width="27" height="27" viewBox="0 0 27 27"><circle cx="13.500" cy="13.500" r="13" fill="#0b7cc4"/><circle cx="13.500" cy="13.500" r="12.500" fill="none" stroke="#9ad0ee" stroke-width=".6"/><path d="M21 13.500H7M12 8l-5.500 5.500L12 19" fill="none" stroke="#fff" stroke-width="2.400"/></svg>`
      : `<svg width="27" height="27" viewBox="0 0 27 27"><circle cx="13.500" cy="13.500" r="12.500" fill="#fff" stroke="#bbb"/><path d="M20 11v5h-8v3l-6-5.500L12 8v3z" fill="none" stroke="#bbb"/></svg>`;
    const fwdBtn = `<svg width="27" height="27" viewBox="0 0 27 27"><circle cx="13.500" cy="13.500" r="12.500" fill="#fff" stroke="#bbb"/><path d="M7 11v5h8v3l6-5.500L15 8v3z" fill="none" stroke="#bbb"/></svg>`;
    const details = mode === 'selected'
      ? `<div class="det"><x-icon name="multi" size="46" h="50" style="margin:6px 0 0 20px"></x-icon><div class="dtxt">7개 항목을 선택했습니다.<em class="lab">&nbsp;수정한 날짜:</em>&nbsp;&nbsp;&nbsp;<em class="rng">2019-06-10 오전 12:00 - 2020-07-21 오전 1:05</em></div></div>`
      : mode === 'drive'
      ? `<div class="det"><x-icon name="bigdrive" size="46" h="24" style="margin:30px 0 0 20px"></x-icon><div class="dtxt" style="margin-left:18px">7개 항목</div></div>`
      : '';
    const views = `<div class="views"><div class="vb on"><x-icon name="viewd" size="14"></x-icon></div><div class="vb"><x-icon name="viewp" size="14"></x-icon></div></div>`;
    this.style.cssText = `left:${this.attr('left')}px;top:${this.attr('top')}px;width:${this.attr('width')}px;height:${this.attr('height')}px;z-index:${this.attr('z')}`;
    this.paint(`
      :host { position: absolute; display: flex; flex-direction: column; background: #fff; box-sizing: border-box;
              border: 1px solid ${active ? '#0078d7' : '#b4b4b4'}; box-shadow: 0 0 10px rgba(0,0,0,.4); }
      .title { height: 30px; flex: none; display: flex; align-items: center; background: ${active ? '#0078d7' : '#fff'}; color: ${fg}; position: relative; }
      .q { display: flex; align-items: center; padding-left: 8px; gap: 7px; height: 100%; }
      .qs { width: 1px; height: 17px; background: ${active ? '#8ac4ef' : '#ccc'}; display: block; margin: 0 1px; }
      .dd { width: 9px; height: 9px; display: block; }
      .cap { margin-left: 7px; }
      .mgr { align-self: flex-end; height: 27px; width: 105px; margin-left: 104px; background: #c1eb9f; color: #222; display: flex; align-items: center; justify-content: center; }
      .mgr + .cap { margin-left: 13px; }
      .ctl { position: absolute; right: 0; top: 0; height: 100%; display: flex; align-items: center; }
      .ctl span { width: 45px; display: flex; justify-content: center; }
      .tabs { height: 24px; flex: none; display: flex; align-items: center; border-bottom: 1px solid #dadada; box-sizing: content-box; position: relative; }
      .file { width: 57px; height: 100%; background: ${active ? '#0e62ad' : '#176fb9'}; color: #fff; display: flex; align-items: center; justify-content: center; margin-right: 13px; }
      .tabs .t { margin-right: 29px; }
      .tool { border: 1px solid #e0e0e0; border-width: 0 1px; height: 100%; display: flex; align-items: center; width: 104px; justify-content: center; margin-left: -13px; margin-right: 0; }
      .help { position: absolute; right: 3px; top: 3px; width: 18px; height: 18px; }
      .up { position: absolute; right: 29px; top: 9px; }
      .addr { height: 40px; flex: none; box-sizing: border-box; padding: 5px 13px 6px 6px; display: flex; align-items: center; }
      .nav { display: flex; align-items: center; gap: 3px; width: 76px; flex: none; }
      .nav svg:last-child { margin-left: 3px; }
      .box { flex: 1; height: 29px; box-sizing: border-box; border: 1px solid #d9d9d9; display: flex; align-items: center; padding-left: 4px; min-width: 0; white-space: nowrap; }
      .gt { margin: 0 7px 0 7px; flex: none; }
      .box .end { margin-left: auto; display: flex; align-items: center; height: 100%; flex: none; background: #fff; }
      .box .drop { width: 30px; display: flex; justify-content: center; }
      .box .ref { width: 29px; height: 100%; border-left: 1px solid #d9d9d9; display: flex; align-items: center; justify-content: center; }
      .search { width: 97px; height: 29px; box-sizing: border-box; border: 1px solid #d9d9d9; margin-left: 12px; flex: none; display: flex; align-items: center; justify-content: flex-end; padding-right: 6px; }
      .body { flex: 1; display: flex; min-height: 0; overflow: hidden; }
      .main { flex: 1; min-width: 0; overflow: hidden; }
      .det { height: 59px; flex: none; background: #eff3fa; border-top: 1px solid #d7e0ef; box-sizing: border-box; display: flex; align-items: flex-start; }
      .dtxt { margin: 6px 0 0 17px; white-space: nowrap; color: #222; }
      .dtxt em { font-style: normal; }
      .lab { color: #555; letter-spacing: 1.6px; }
      .rng { letter-spacing: .46px; }
      .status { height: 23px; flex: none; display: flex; align-items: center; padding-left: 14px; color: #222; position: relative; }
      .si { padding-right: 11px; margin-right: 11px; border-right: 1px solid #eee; line-height: 20px; }
      .views { position: absolute; right: 7px; top: 0; height: 100%; display: flex; align-items: center; gap: 4px; }
      .vb { width: 21px; height: 23px; display: flex; align-items: center; justify-content: center; box-sizing: border-box; }
      .vb + .vb { width: 14px; }
      .vb.on { background: #cce8ff; border: 1px solid #66a7e8; border-bottom: 0; }
    `, `
      <div class="title">
        <div class="q"><x-icon name="${this.attr('title-icon')}" size="16"></x-icon>${sep}
          <x-icon name="qdoc" size="14" h="16"></x-icon><x-icon name="${active ? 'qfolderY' : 'qfolder'}" size="14" h="16"></x-icon>
          <svg class="dd" viewBox="0 0 9 9"><path d="M1 1h7M1 4h7L4.500 8z" fill="${active ? '#fff' : '#333'}" stroke="${active ? '#fff' : '#333'}" stroke-width=".6"/></svg>${sep}</div>
        ${this.hasAttribute('manage') ? '<div class="mgr">관리</div>' : ''}<span class="cap">${this.attr('title')}</span>
        <div class="ctl"><span>${ctl(active ? '#fff' : '#999')}</span>${active ? `<span>${WIN_MAX('#fff')}</span><span>${WIN_X('#fff')}</span>` : '<span></span><span></span>'}</div>
      </div>
      <div class="tabs"><div class="file">파일</div>${tabs.map(t => `<div class="t">${t}</div>`).join('')}
        ${this.hasAttribute('manage') ? `<div class="tool">드라이브 도구</div><svg class="up" width="11" height="7" viewBox="0 0 11 7"><path d="M1 1l4.500 4.500L10 1" fill="none" stroke="#999"/></svg><svg class="help" viewBox="0 0 18 18"><circle cx="9" cy="9" r="9" fill="#0a64b4"/><text x="9" y="14" text-anchor="middle" font-size="13" font-weight="700" font-family="Liberation Sans" fill="#fff">?</text></svg>` : ''}</div>
      <div class="addr">
        <div class="nav">${backBtn}${fwdBtn}${dn('#999')}</div>
        <div class="box"><x-icon name="${this.attr('addr-icon')}" size="16"></x-icon>${gt}${crumbs.map(c => `<div>${c}</div>`).join(gt)}${crumbs.length === 1 ? gt : ''}
          <div class="end"><div class="drop">${dn('#555')}</div><div class="ref"><svg width="13" height="14" viewBox="0 0 13 14"><path d="M6.500 2a5 5 0 1 0 5 5" transform="rotate(40 6.500 7)" fill="none" stroke="#888" stroke-width="1.400"/><path d="M5 0l4 2.500L5 5z" fill="#888"/></svg></div></div></div>
        <div class="search"><svg width="14" height="14" viewBox="0 0 14 14"><circle cx="9" cy="5" r="3.700" fill="none" stroke="#666" stroke-width="1.500"/><path d="M6 8l-5 5" stroke="#666" stroke-width="2"/></svg></div>
      </div>
      <div class="body"><nav-pane></nav-pane><div class="main"><slot></slot></div></div>
      ${details}
      ${status.length ? `<div class="status">${status.map(s => `<div class="si">${s}</div>`).join('')}${views}</div>` : ''}
    `);
  }
}

const FILES = [
  ['folder','boot','2020-07-21 오전 1:05','파일 폴더',''],
  ['folder','efi','2020-07-21 오전 1:06','파일 폴더',''],
  ['folder','sources','2020-07-15 오후 5:49','파일 폴더',''],
  ['ico','autorun','2019-06-10 오전 12:00','ICO 파일','224KB'],
  ['inf','autorun','2019-06-10 오전 12:00','설치 정보','1KB'],
  ['file','bootmgr','2020-05-11 오후 3:36','파일','405KB'],
  ['file','bootmgr.efi','2020-05-11 오후 3:36','EFI 파일','1,506KB']
];

class FileList extends Base {
  render() {
    const cols = this.attr('widths');
    const sel = this.hasAttribute('selected');
    const sizes = this.hasAttribute('sizes');
    this.paint(`
      :host { display: block; padding: 2px 0 0 15px; white-space: nowrap; }
      .hd, .rw { display: grid; grid-template-columns: ${cols}; width: max-content; }
      .hd { height: 25px; margin-bottom: 6px; color: #4c607a; position: relative; }
      .hd > div { display: flex; align-items: center; padding-left: 7px; border-right: 1px solid #e5e5e5; box-sizing: border-box; height: 25px; }
      .hd > div:first-child { padding-left: 4px; }
      .caret { position: absolute; left: calc(50% - 4px); top: 0; }
      .name { position: relative; }
      .rw { height: 21px; align-items: center; box-sizing: border-box; }
      .rw.s { background: #d9d9d9; border-bottom: 1px solid #efefef; }
      .n { display: flex; align-items: center; gap: 7px; padding-left: 5px; color: #1a1a1a; }
      .d { padding-left: 7px; color: #6d6d6d; letter-spacing: .25px; }
      .z { text-align: right; padding-right: 7px; color: #6d6d6d; }
    `, `
      <div class="hd"><div class="name">이름<svg class="caret" width="9" height="5" viewBox="0 0 9 5"><path d="M1 4.500L4.500 1 8 4.500" fill="none" stroke="#777"/></svg></div><div>수정한 날짜</div><div>유형</div><div>크기</div></div>
      ${FILES.map(f => `<div class="rw ${sel ? 's' : ''}"><div class="n"><x-icon name="${f[0]}" size="13" h="16"></x-icon>${f[1]}</div><div class="d">${f[2]}</div><div class="d">${f[3]}</div><div class="z">${sizes ? f[4] : ''}</div></div>`).join('')}
    `);
  }
}

class DriveGroup extends Base {
  render() {
    this.paint(`
      :host { display: block; padding-top: 12px; margin-top: -11px; }
      :host(:first-child) { margin-top: 0; }
      h3 { margin: 0; height: 16px; font-size: 15px; font-weight: 400; line-height: 16px; color: #1e3287; display: flex; align-items: center; gap: 8px; padding-left: 8px; white-space: nowrap; }
      h3 svg { flex: none; margin-right: -5px; }
      h3 i { flex: 1; height: 1px; background: #e2e2e2; }
      .g { display: grid; grid-template-columns: repeat(3, 254px); padding: 9px 0 0 21px; }
    `, `<h3><svg width="11" height="7" viewBox="0 0 11 7"><path d="M1 1l4.500 4.500L10 1" fill="none" stroke="#666"/></svg>${this.attr('heading')}<i></i></h3><div class="g"><slot></slot></div>`);
  }
}

class DriveTile extends Base {
  render() {
    this.paint(`
      :host { display: grid; grid-template-columns: 41px 1fr; column-gap: 10px; height: 56px; }
      .ic { position: relative; padding-top: 15px; }
      .share { position: absolute; left: -3px; top: 31px; width: 11px; height: 15px; background: #f6f6f6; border: 1px solid #888; box-sizing: border-box; }
      .share::after { content: ""; display: block; margin: 3px 1px 0; height: 8px; background: linear-gradient(#c79a52 40%, #2c7b4d 40%); }
      .nm { height: 16px; line-height: 16px; white-space: nowrap; margin-left: 1px; }
      .bar { width: 188px; height: 12px; margin-top: 2px; background: #e6e6e6; border: 1px solid #bcbcbc; box-sizing: border-box; }
      .bar i { display: block; height: 100%; background: #26a0da; }
      .in { margin-top: 2px; height: 16px; line-height: 16px; color: #6d6d6d; white-space: nowrap; }
    `, `<div class="ic"><x-icon name="bigdrive" size="41" h="31"></x-icon>${this.hasAttribute('shared') ? '<i class="share"></i>' : ''}</div>
        <div><div class="nm">${this.attr('name')}</div><div class="bar"><i style="width:${this.attr('used')}%"></i></div><div class="in">${this.attr('info')}</div></div>`);
  }
}

class IconDock extends Base {
  render() {
    const rows = [
      ['d1d','d7z','dtri','dacr'],['d64','daimp','dburn','dany'],['diso','dsync','dpart','dflop'],['dscr','dmag','dtile','deye'],
      ['dglobe','dlock','dtalk','dwin'],['dnt','dpdf','dring','dsh'],['dplay','dgrid','dreg','dbak'],
      ['','','','dt'],['','','','dnote'],['','','','dgear'],['','','','dbook'],['','','','ddisk'],['','','','ds'],['','','','dsq']
    ];
    this.paint(`
      :host { position: absolute; left: 1567px; top: 188px; width: 195px; height: 609px; z-index: 3; box-sizing: border-box;
              background: linear-gradient(90deg, #7a7a7a 0, #4a4a4c 50%, #242427 51%, #1e1e22 100%) top/100% 16px no-repeat, #27272b;
              border-radius: 6px 6px 0 0; border: 1px solid #555; padding: 15px 7px 25px 7px; box-shadow: 0 0 4px rgba(0,0,0,.5); }
      .x { position: absolute; left: 10px; top: 2px; color: #eee; font: 700 12px/12px "Liberation Sans",sans-serif; }
      .in { height: 100%; border-radius: 6px; background: linear-gradient(90deg, #e4e5e6 0 91px, #cfd1d4 91px, #dcdde0); display: grid; grid-template-columns: repeat(4, 40px); grid-auto-rows: 40px; justify-content: start; padding: 4px 0 0 8px; box-sizing: border-box; }
      .c { display: flex; align-items: center; justify-content: center; }
    `, `<div class="x">✕</div><div class="in">${rows.flat().map(n => `<div class="c">${n ? `<x-icon name="${n}" size="32"></x-icon>` : ''}</div>`).join('')}</div>`);
  }
}

class TaskBar extends Base {
  render() {
    const apps = ['tdesk','note','die','dedge','cherry','tmmc'];
    this.paint(`
      :host { position: absolute; left: 0; bottom: 0; width: 100%; height: 40px; z-index: 9; background: #13294f; display: flex; align-items: stretch; color: #fff; }
      .st { width: 51px; display: flex; align-items: center; padding-left: 16px; box-sizing: border-box; flex: none; }
      .ap { width: 49px; display: flex; align-items: center; justify-content: center; box-sizing: border-box; position: relative; flex: none; }
      .ap.fx { background: linear-gradient(90deg, #135c9e 0 44px, #0f2c55 44px 45px, #1b4e85 45px); }
      .ap.fx::after, .ap.run::after { content: ""; position: absolute; bottom: 0; height: 2px; background: #9acbef; }
      .ap.fx::after { left: 0; right: 1px; }
      .ap.run::after { left: 4px; right: 5px; }
      .tray { margin-left: auto; display: flex; align-items: center; }
      .tray svg { display: block; }
      .a { font: 18px/20px "Noto Sans",sans-serif; margin: 0 0 0 9px; }
      .clock { text-align: center; line-height: 19px; padding: 0 12px 0 13px; font-size: 12.500px; }
    `, `
      <div class="st"><x-icon name="win" size="16"></x-icon></div>
      <div class="ap fx"><x-icon name="fx" size="22"></x-icon></div>
      ${apps.map((a, i) => `<div class="ap ${i === 5 ? 'run' : ''}"><x-icon name="${a}" size="22"></x-icon></div>`).join('')}
      <div class="tray">
        <x-icon name="caretup" size="13"></x-icon>
        <x-icon name="trnet" size="17" style="margin-left:9px"></x-icon>
        <x-icon name="trvol" size="16" style="margin-left:8px"></x-icon>
        <div class="a">A</div>
        <div class="clock">오후 10:41:59<br>2020-07-21</div>
      </div>
    `);
  }
}

customElements.define('x-icon', XIcon);
customElements.define('desk-top', DeskTop);
customElements.define('desk-icons', DeskIcons);
customElements.define('disk-part', DiskPart);
customElements.define('mmc-window', MmcWindow);
customElements.define('nav-pane', NavPane);
customElements.define('explorer-window', ExplorerWindow);
customElements.define('file-list', FileList);
customElements.define('drive-group', DriveGroup);
customElements.define('drive-tile', DriveTile);
customElements.define('icon-dock', IconDock);
customElements.define('task-bar', TaskBar);
</script>
</body>
</html>
